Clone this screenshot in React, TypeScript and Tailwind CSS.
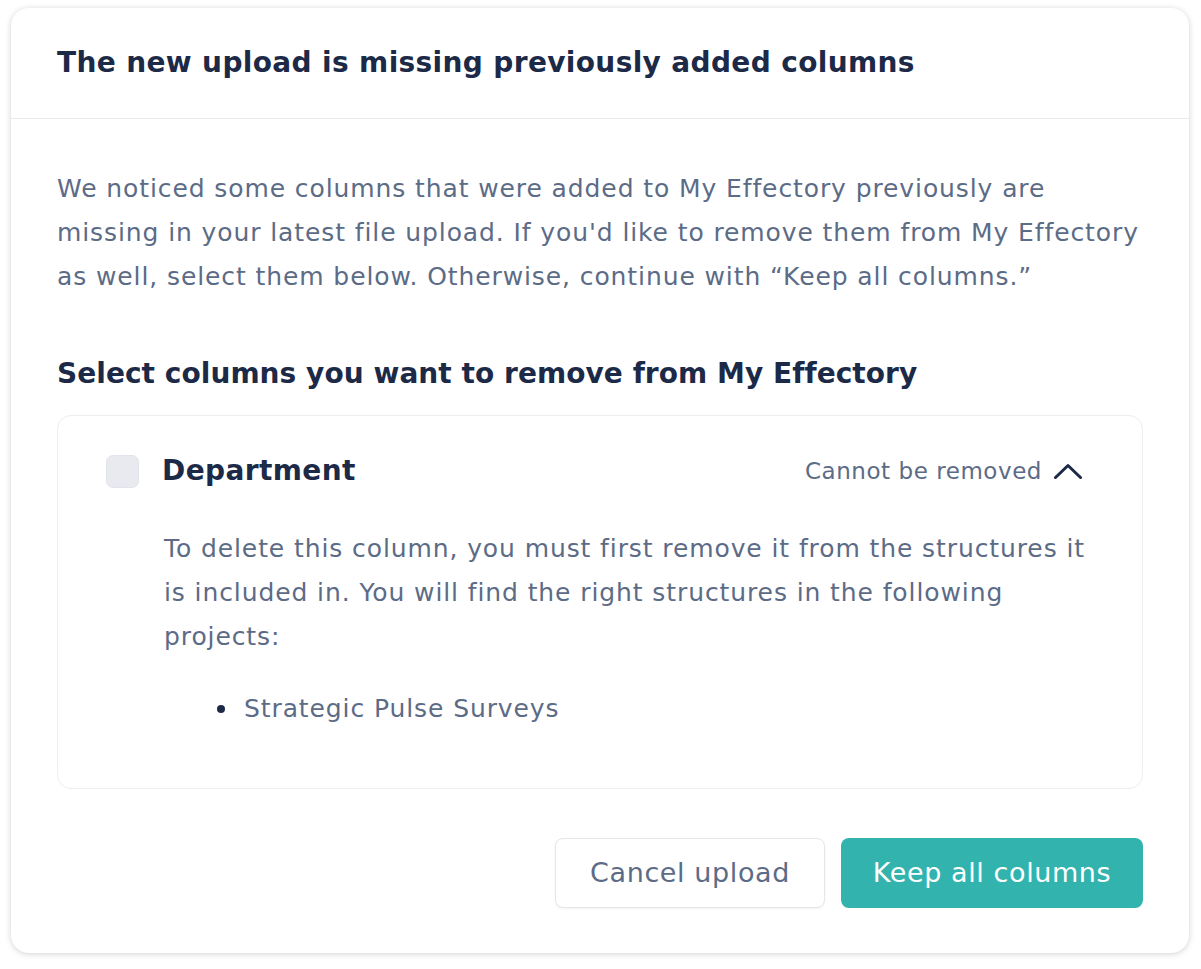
import React from "react";

export default function App() {
  return (
    <div className="min-h-screen bg-white pt-[8px] pl-[11px]" style={{ fontFamily: '"DejaVu Sans", "Open Sans", sans-serif' }}>
      <div className="w-[1178px] h-[945px] rounded-[18px] bg-white shadow-[0_1px_6px_rgba(0,0,0,0.18)] flex flex-col">
        <div className="h-[111px] border-b border-[#e9eaee] pl-[46px] flex items-center">
          <h1 className="text-[28px] font-semibold text-[#1c2a48] leading-[40px] tracking-[0.35px]">
            The new upload is missing previously added columns
          </h1>
        </div>
        <div className="px-[46px] pt-[48px] flex flex-col">
          <p className="text-[25px] leading-[44px] text-[#5c6b86] tracking-[0.9px]">
            We noticed some columns that were added to My Effectory previously are missing in your latest file upload. If you'd like to remove them from My Effectory as well, select them below. Otherwise, continue with “Keep all columns.”
          </p>
          <h2 className="mt-[55px] text-[28px] font-semibold text-[#1c2a48] leading-[40px] tracking-[0.05px]">
            Select columns you want to remove from My Effectory
          </h2>
          <div className="mt-[21px] h-[374px] rounded-[14px] border border-[#eceef1] pl-[48px] pr-[44px] pt-[35px]">
            <div className="flex items-center h-[40px] mr-[16px]">
              <div className="w-[33px] h-[33px] rounded-[7px] bg-[#e8eaef] border border-[#e1e4ea]" />
              <span className="ml-[23px] text-[28px] font-semibold text-[#1c2a48] leading-[40px] tracking-[0.4px]">Department</span>
              <div className="ml-auto flex items-center">
                <span className="text-[23px] text-[#5c6b86] leading-[30px] tracking-[0.55px]">Cannot be removed</span>
                <svg className="ml-[12px]" width="28" height="16" viewBox="0 0 28 16" fill="none">
                  <path d="M1.5 14.5 L14 2.5 L26.5 14.5" stroke="#1c2a48" strokeWidth="3" strokeLinecap="round" strokeLinejoin="round" />
                </svg>
              </div>
            </div>
            <div className="pl-[58px] pt-[36px]">
              <p className="text-[25px] leading-[44px] text-[#5c6b86] tracking-[0.9px]">
                To delete this column, you must first remove it from the structures it is included in. You will find the right structures in the following projects:
              </p>
              <ul className="mt-[28px] pl-[53px]">
                <li className="flex items-center text-[25px] leading-[44px] text-[#5c6b86] tracking-[0.9px]">
                  <span className="w-[8px] h-[8px] rounded-full bg-[#1c2a48] mr-[19px]" />
                  Strategic Pulse Surveys
                </li>
              </ul>
            </div>
          </div>
          <div className="mt-[49px] flex justify-end gap-[16px]">
            <button className="w-[270px] h-[70px] rounded-[8px] border border-[#e3e6eb] bg-white text-[27px] text-[#5c6b86] tracking-[0.6px] shadow-[0_1px_2px_rgba(0,0,0,0.05)]">
              Cancel upload
            </button>
            <button className="w-[302px] h-[70px] rounded-[8px] bg-[#32b3ae] text-[27px] text-white tracking-[0.6px]">
              Keep all columns
            </button>
          </div>
        </div>
      </div>
    </div>
  );
}
